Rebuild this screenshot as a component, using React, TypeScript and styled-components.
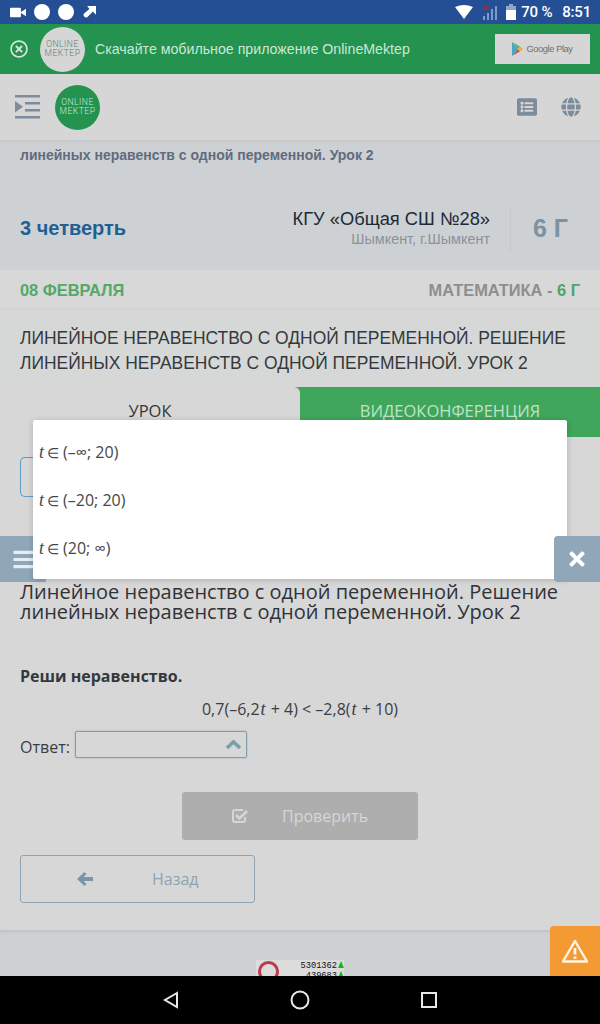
import styled, { createGlobalStyle } from "styled-components";
import { FaBars, FaGlobe, FaListAlt, FaRegTimesCircle, FaTimes } from "react-icons/fa";

const GlobalStyle = createGlobalStyle`
    html, body {
        margin: 0;
        padding: 0;
        background: #d6d6d6;
    }
    * {
        box-sizing: border-box;
    }
`;

const Screen = styled.div`
    position: relative;
    width: 600px;
    height: 1024px;
    overflow: hidden;
    display: flex;
    flex-direction: column;
    background: #d7d7d7;
    font-family: "Open Sans", sans-serif;
    color: #333;
`;

// android status bar
const StatusBar = styled.div`
    height: 24px;
    flex: none;
    background: #254f94;
    display: flex;
    align-items: center;
    justify-content: space-between;
    padding: 0 9px 0 10px;
    color: #fff;
`;
const StatusGroup = styled.div`
    display: flex;
    align-items: center;
    gap: 8px;
`;
const StatusDot = styled.div`
    width: 16px;
    height: 16px;
    border-radius: 50%;
    background: #fff;
`;
const StatusText = styled.span<{ $gap?: number }>`
    font-family: "Roboto", sans-serif;
    font-size: 15px;
    font-weight: 500;
    letter-spacing: -0.2px;
    margin-left: ${(p) => p.$gap ?? 0}px;
`;

const Banner = styled.div`
    height: 50px;
    flex: none;
    background: #23934f;
    display: flex;
    align-items: center;
    padding: 0 10px;
    color: #cfe6d6;
`;
const BannerClose = styled.div`
    display: flex;
    font-size: 18px;
    color: #d6e6da;
`;
const LogoCircle = styled.div<{ $bg: string; $fg: string; $left: number }>`
    width: 45px;
    height: 45px;
    flex: none;
    border-radius: 50%;
    margin-left: ${(p) => p.$left}px;
    background: ${(p) => p.$bg};
    color: ${(p) => p.$fg};
    display: flex;
    align-items: center;
    justify-content: center;
    text-align: center;
    font-family: "Roboto", sans-serif;
    font-size: 8.6px;
    line-height: 9px;
    font-weight: 300;
    letter-spacing: 0.5px;
`;
const BannerText = styled.div`
    margin-left: 10px;
    flex: 1;
    font-family: "Liberation Sans", sans-serif;
    font-size: 14.2px;
`;
const PlayButton = styled.div`
    width: 95px;
    height: 30px;
    background: #d6d6d6;
    display: flex;
    align-items: center;
    justify-content: center;
    gap: 3px;
    color: #6f6f6f;
    font-family: "Liberation Sans", sans-serif;
    font-size: 9.3px;
    letter-spacing: -0.4px;
`;

const Header = styled.div`
    height: 66px;
    flex: none;
    background: #d6d6d6;
    display: flex;
    align-items: center;
    padding: 0 19px 0 15px;
    color: #7c8c9c;
`;
const HeaderIcons = styled.div`
    margin-left: auto;
    display: flex;
    align-items: center;
    gap: 24px;
    font-size: 20px;
`;

const SchoolSection = styled.div`
    height: 130px;
    flex: none;
    background: #cdd1d3;
    display: flex;
    flex-direction: column;
    padding: 7px 20px 0;
    font-family: "Liberation Sans", sans-serif;
    box-shadow: inset 0 4px 3px -3px #c2c4c6;
`;
const LessonCrumb = styled.div`
    font-size: 14px;
    font-weight: 700;
    color: #626b7d;
    line-height: 17px;
`;
const SchoolRow = styled.div`
    margin-top: 42px;
    display: flex;
    align-items: center;
`;
const Quarter = styled.div`
    font-size: 20px;
    font-weight: 700;
    color: #1f5f93;
`;
const SchoolInfo = styled.div`
    margin-left: auto;
    text-align: right;
    padding-right: 20px;
    height: 45px;
    display: flex;
    flex-direction: column;
    justify-content: center;
`;
const SchoolName = styled.div`
    font-size: 18.3px;
    line-height: 20px;
    color: #1d2a36;
`;
const SchoolCity = styled.div`
    font-size: 14.4px;
    line-height: 20px;
    color: #8a929a;
`;
const ClassName = styled.div`
    width: 70px;
    height: 45px;
    border-left: 1px solid #c2c7ca;
    display: flex;
    align-items: center;
    padding-left: 22px;
    font-size: 25px;
    font-weight: 700;
    color: #7d91a3;
`;

const DateBar = styled.div`
    height: 40px;
    flex: none;
    padding: 0 20px;
    display: flex;
    align-items: center;
    justify-content: space-between;
    background: #d8d8d8;
    font-family: "Liberation Sans", sans-serif;
    font-size: 16.4px;
    font-weight: 700;
    color: #54a868;
    box-shadow: inset 0 -2px 2px -1px #cdcdcd;
`;
const Subject = styled.div`
    color: #8e8e8e;
`;
const SubjectClass = styled.span`
    color: #4ea564;
`;

const LessonTitle = styled.div`
    height: 77px;
    flex: none;
    padding: 16px 20px 0;
    background: #d6d8d8;
    font-family: "Liberation Sans", sans-serif;
    font-size: 17.45px;
    line-height: 25px;
    color: #34383c;
`;

const Tabs = styled.div`
    height: 50px;
    flex: none;
    display: flex;
    background: #3fa65c;
`;
const Tab = styled.div<{ $active?: boolean }>`
    width: 300px;
    padding-top: 14px;
    text-align: center;
    font-size: 16.5px;
    line-height: 20px;
    color: ${(p) => (p.$active ? "#33373b" : "#bfe3c8")};
    background: ${(p) => (p.$active ? "#d7d7d7" : "#3fa65c")};
    border-top-right-radius: ${(p) => (p.$active ? 6 : 0)}px;
`;

const Body = styled.div`
    flex: 1;
    display: flex;
    flex-direction: column;
    background: #d7d7d7;
    padding-top: 20px;
`;
const OutlineBox = styled.div`
    width: 60px;
    height: 40px;
    margin-left: 20px;
    flex: none;
    border: 1px solid #5d9cc9;
    border-right: none;
    border-radius: 5px 0 0 5px;
`;
const ToolRow = styled.div`
    margin-top: 39px;
    height: 46px;
    flex: none;
    display: flex;
    justify-content: space-between;
`;
const ToolButton = styled.div`
    width: 46px;
    height: 46px;
    background: #8fa7b9;
    color: #e9edf0;
    display: flex;
    align-items: center;
    justify-content: center;
    font-size: 23px;
`;
const CloseTool = styled(ToolButton)`
    position: relative;
    z-index: 3;
    border-radius: 4px 0 0 4px;
    font-size: 22px;
    color: #fff;
`;
const MenuTool = styled(ToolButton)`
    justify-content: flex-start;
    padding-left: 12px;
`;

const Article = styled.div`
    padding: 0 20px;
    display: flex;
    flex-direction: column;
`;
const ArticleTitle = styled.div`
    font-size: 20px;
    line-height: 20px;
    color: #2f3338;
`;
const Prompt = styled.div`
    margin-top: 43px;
    font-size: 16px;
    line-height: 22px;
    font-weight: 700;
    color: #33383c;
`;
const Equation = styled.div`
    margin-top: 11px;
    text-align: center;
    font-size: 16px;
    line-height: 22px;
    color: #3a3e42;
`;
const MathVar = styled.i`
    font-family: "Liberation Serif", serif;
    font-size: 18px;
    padding: 0 1px;
`;
const AnswerRow = styled.div`
    margin-top: 11px;
    display: flex;
    align-items: flex-end;
    font-size: 16px;
    line-height: 22px;
    gap: 5px;
    color: #3a3e42;
`;
const AnswerSelect = styled.div`
    width: 172px;
    height: 27px;
    border: 1px solid #7f9cb0;
    border-radius: 2px;
    box-shadow: 0 0 2px #94a9b6;
    display: flex;
    align-items: center;
    justify-content: flex-end;
    padding-right: 4px;
`;
const CheckRow = styled.div`
    margin-top: 34px;
    display: flex;
    justify-content: center;
`;
const CheckButton = styled.div`
    width: 236px;
    height: 48px;
    border-radius: 3px;
    background: #aeaeae;
    color: #d6d6d6;
    display: flex;
    align-items: center;
    padding-left: 50px;
    gap: 34px;
    font-size: 16px;
`;
const BackButton = styled.div`
    margin-top: 15px;
    width: 235px;
    height: 48px;
    border: 1px solid #8ea3b3;
    border-radius: 3px;
    color: #8ea3b0;
    display: flex;
    align-items: center;
    padding-left: 56px;
    gap: 59px;
    font-size: 16px;
`;

const Footer = styled.div`
    height: 46px;
    flex: none;
    margin-top: auto;
    background: #cdd1d3;
    box-shadow: inset 0 4px 3px -2px #c0c2c4;
    padding: 30px 0 0 256px;
    overflow: hidden;
`;
const Counter = styled.div`
    width: 88px;
    height: 30px;
    background: #dcdcdc;
    display: flex;
    padding: 1px 0 0 2px;
`;
const CounterRing = styled.div`
    width: 21px;
    height: 21px;
    flex: none;
    border-radius: 50%;
    border: 3px solid #bd3b4a;
`;
const CounterNumbers = styled.div`
    margin-left: auto;
    font-family: "Liberation Mono", monospace;
    font-size: 8.7px;
    line-height: 10px;
    color: #111;
    text-align: right;
`;
const CounterUp = styled.span`
    display: inline-block;
    width: 0;
    height: 0;
    margin-left: 1px;
    border-left: 3px solid transparent;
    border-right: 3px solid transparent;
    border-bottom: 7px solid #19b519;
`;

const NavBar = styled.div`
    height: 48px;
    flex: none;
    background: #000;
    display: flex;
    align-items: center;
    justify-content: center;
    gap: 110px;
`;

// opened select list, sits over the page
const OptionList = styled.div`
    position: absolute;
    left: 33px;
    top: 420px;
    width: 534px;
    height: 159px;
    padding-top: 8px;
    background: #fff;
    border-radius: 2px;
    box-shadow: 0 1px 6px rgba(0, 0, 0, 0.18);
    z-index: 2;
`;
const Option = styled.div`
    height: 48px;
    padding-left: 5px;
    display: flex;
    align-items: center;
    font-size: 16px;
    color: #43474b;
    white-space: pre;
`;
const Belongs = styled.span`
    margin: 0 4px 0 2px;
    font-size: 14px;
`;

const WarnButton = styled.div`
    position: absolute;
    right: 0;
    top: 926px;
    width: 50px;
    height: 50px;
    background: #f39a32;
    border-radius: 4px 0 0 0;
    display: flex;
    align-items: center;
    justify-content: center;
`;

const options = ["(–∞; 20)", "(–20; 20)", "(20; ∞)"];

function IndentIcon() {
    return (
        <svg width="26" height="24" viewBox="0 0 26 24" fill="#7c8c9c">
            <rect x="0" y="0" width="25" height="2.5" />
            <rect x="10" y="7" width="15" height="2.5" />
            <rect x="10" y="14" width="15" height="2.5" />
            <rect x="0" y="21" width="25" height="2.5" />
            <path d="M0 6 L8 11.8 L0 17.5 Z" />
        </svg>
    );
}

function PlayLogo() {
    return (
        <svg width="11" height="14" viewBox="0 0 11 14">
            <path d="M0 0 L6 7 L0 14 Z" fill="#4aa7c9" />
            <path d="M0 0 L8 4.6 L6 7 Z" fill="#62b06a" />
            <path d="M0 14 L8 9.4 L6 7 Z" fill="#c9574f" />
            <path d="M8 4.6 L11 7 L8 9.4 L6 7 Z" fill="#e2b53c" />
        </svg>
    );
}

function CheckIcon() {
    return (
        <svg width="16" height="14" viewBox="0 0 16 14" fill="none" stroke="#d6d6d6" strokeWidth="2">
            <path d="M13 8 V11 A2 2 0 0 1 11 13 H3 A2 2 0 0 1 1 11 V3 A2 2 0 0 1 3 1 H11" />
            <path d="M4 6 L7.5 9.5 L15 2" strokeWidth="2.6" />
        </svg>
    );
}

function ChevronIcon() {
    return (
        <svg width="17" height="11" viewBox="0 0 17 11" fill="none" stroke="#7a9fa9" strokeWidth="3.6">
            <path d="M2 9 L8.5 3 L15 9" />
        </svg>
    );
}

function BackIcon() {
    return (
        <svg width="16" height="14" viewBox="0 0 16 14" fill="#7b95a5">
            <path d="M7.5 0 L9.5 2 L6.5 5 H16 V9 H6.5 L9.5 12 L7.5 14 L0 7 Z" />
        </svg>
    );
}

function WarningIcon() {
    return (
        <svg width="26" height="24" viewBox="0 0 26 24" fill="none" stroke="#fff3e2" strokeWidth="2.4" strokeLinejoin="round">
            <path d="M13 2 L25 22.5 H1 Z" />
            <path d="M13 9 V15.5" strokeWidth="2.8" />
            <path d="M13 17.5 V20" strokeWidth="2.8" />
        </svg>
    );
}

function StatusIcons() {
    return (
        <StatusGroup>
            <svg width="16" height="13" viewBox="0 0 19 13" fill="#fff">
                <rect x="0" y="1" width="13" height="11" rx="1" />
                <path d="M13 6 L19 2 V11 L13 7 Z" />
            </svg>
            <StatusDot />
            <StatusDot />
            <svg width="14" height="14" viewBox="0 0 16 16" fill="#fff">
                <path d="M6 1 H16 V11 L12.5 7.5 L6 14 A3 3 0 0 1 2 10 L8.5 4.5 Z" />
            </svg>
        </StatusGroup>
    );
}

function StatusRight() {
    return (
        <StatusGroup>
            <svg width="20" height="14" viewBox="0 0 18 14" fill="#fff">
                <path d="M0 2 Q9 -2 18 2 L9 14 Z" />
            </svg>
            <svg width="16" height="15" viewBox="0 0 16 15">
                <rect x="1" y="11" width="2" height="4" fill="#7f9ac5" />
                <rect x="5" y="8" width="2" height="7" fill="#7f9ac5" />
                <rect x="9" y="4" width="2" height="11" fill="#7f9ac5" />
                <rect x="13" y="1" width="2" height="14" fill="#7f9ac5" />
                <circle cx="4" cy="3" r="2.5" fill="#8c3048" />
            </svg>
            <svg width="10" height="16" viewBox="0 0 10 16">
                <rect x="0" y="2" width="10" height="14" fill="#fff" />
                <rect x="0" y="2" width="10" height="4" fill="#8fa5c9" />
                <rect x="3" y="0" width="4" height="2" fill="#8fa5c9" />
            </svg>
            <StatusText $gap={-3}>70 %</StatusText>
            <StatusText $gap={2}>8:51</StatusText>
        </StatusGroup>
    );
}

export default function App() {
    return (
        <Screen>
            <GlobalStyle />
            <StatusBar>
                <StatusIcons />
                <StatusRight />
            </StatusBar>
            <Banner>
                <BannerClose>
                    <FaRegTimesCircle />
                </BannerClose>
                <LogoCircle $bg="#d6d6d6" $fg="#5f7f70" $left={12}>
                    ONLINE
                    <br />
                    MEKTEP
                </LogoCircle>
                <BannerText>Скачайте мобильное приложение OnlineMektep</BannerText>
                <PlayButton>
                    <PlayLogo />
                    Google Play
                </PlayButton>
            </Banner>
            <Header>
                <IndentIcon />
                <LogoCircle $bg="#23934f" $fg="#cfe6d6" $left={14}>
                    ONLINE
                    <br />
                    MEKTEP
                </LogoCircle>
                <HeaderIcons>
                    <FaListAlt />
                    <FaGlobe />
                </HeaderIcons>
            </Header>
            <SchoolSection>
                <LessonCrumb>линейных неравенств с одной переменной. Урок 2</LessonCrumb>
                <SchoolRow>
                    <Quarter>3 четверть</Quarter>
                    <SchoolInfo>
                        <SchoolName>КГУ «Общая СШ №28»</SchoolName>
                        <SchoolCity>Шымкент, г.Шымкент</SchoolCity>
                    </SchoolInfo>
                    <ClassName>6 Г</ClassName>
                </SchoolRow>
            </SchoolSection>
            <DateBar>
                <div>08 ФЕВРАЛЯ</div>
                <Subject>
                    МАТЕМАТИКА - <SubjectClass>6 Г</SubjectClass>
                </Subject>
            </DateBar>
            <LessonTitle>
                ЛИНЕЙНОЕ НЕРАВЕНСТВО С ОДНОЙ ПЕРЕМЕННОЙ. РЕШЕНИЕ ЛИНЕЙНЫХ НЕРАВЕНСТВ С ОДНОЙ
                ПЕРЕМЕННОЙ. УРОК 2
            </LessonTitle>
            <Tabs>
                <Tab $active>УРОК</Tab>
                <Tab>ВИДЕОКОНФЕРЕНЦИЯ</Tab>
            </Tabs>
            <Body>
                <OutlineBox />
                <ToolRow>
                    <MenuTool>
                        <FaBars />
                    </MenuTool>
                    <CloseTool>
                        <FaTimes />
                    </CloseTool>
                </ToolRow>
                <Article>
                    <ArticleTitle>
                        Линейное неравенство с одной переменной. Решение линейных неравенств с одной
                        переменной. Урок 2
                    </ArticleTitle>
                    <Prompt>Реши неравенство.</Prompt>
                    <Equation>
                        0,7(–6,2<MathVar>t</MathVar> + 4) &lt; –2,8(<MathVar>t</MathVar> + 10)
                    </Equation>
                    <AnswerRow>
                        Ответ:
                        <AnswerSelect>
                            <ChevronIcon />
                        </AnswerSelect>
                    </AnswerRow>
                    <CheckRow>
                        <CheckButton>
                            <CheckIcon />
                            Проверить
                        </CheckButton>
                    </CheckRow>
                    <BackButton>
                        <BackIcon />
                        Назад
                    </BackButton>
                </Article>
                <Footer>
                    <Counter>
                        <CounterRing />
                        <CounterNumbers>
                            5301362
                            <CounterUp />
                            <br />
                            439683
                            <CounterUp />
                        </CounterNumbers>
                    </Counter>
                </Footer>
            </Body>
            <NavBar>
                <svg width="18" height="18" viewBox="0 0 18 18" fill="none" stroke="#e8e8e8" strokeWidth="2">
                    <path d="M15 2 L3 9 L15 16 Z" />
                </svg>
                <svg width="20" height="20" viewBox="0 0 20 20" fill="none" stroke="#e8e8e8" strokeWidth="2">
                    <circle cx="10" cy="10" r="8.5" />
                </svg>
                <svg width="18" height="18" viewBox="0 0 18 18" fill="none" stroke="#e8e8e8" strokeWidth="2">
                    <rect x="2" y="2" width="14" height="14" />
                </svg>
            </NavBar>
            <OptionList>
                {options.map((o) => (
                    <Option key={o}>
                        <MathVar>t</MathVar>
                        <Belongs>∈</Belongs>
                        {o}
                    </Option>
                ))}
            </OptionList>
            <WarnButton>
                <WarningIcon />
            </WarnButton>
        </Screen>
    );
}
